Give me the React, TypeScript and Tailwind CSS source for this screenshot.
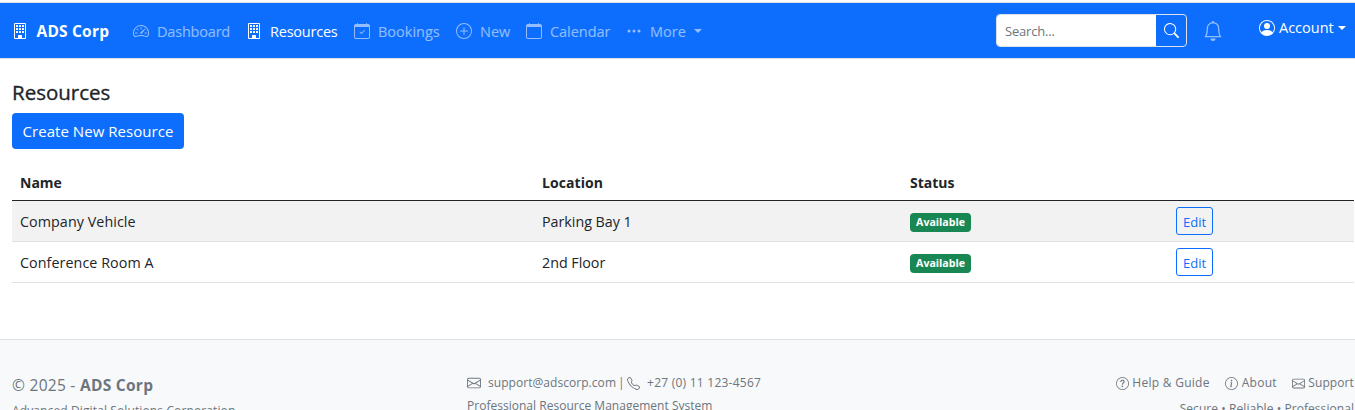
import type { ReactNode } from "react";
import {
  BsBell,
  BsBuilding,
  BsCalendar,
  BsCalendarCheck,
  BsEnvelope,
  BsInfoCircle,
  BsPersonCircle,
  BsPlusCircle,
  BsQuestionCircle,
  BsSearch,
  BsSpeedometer2,
  BsTelephone,
  BsThreeDots,
} from "react-icons/bs";

function Caret() {
  return <span className="block h-0 w-0 border-x-4 border-t-4 border-x-transparent border-t-current" />;
}

type NavItemProps = { icon: ReactNode; label: string; width: string; active?: boolean; children?: ReactNode };

function NavItem({ icon, label, width, active, children }: NavItemProps) {
  return (
    <a className={`flex shrink-0 items-center ${width} ${active ? "text-white" : "text-white/55"}`}>
      <span className="mr-2 w-4 shrink-0">{icon}</span>
      <span className="pt-px">{label}</span>
      {children}
    </a>
  );
}

function Navbar() {
  return (
    <nav className="flex h-[57px] items-center border-y border-[#dee2e6] bg-[#0d6efd] pl-3 text-white">
      <a className="flex w-[121px] shrink-0 items-center pt-px text-[15.5px] font-bold tracking-[0.2px]">
        <BsBuilding className="mr-[8.5px] size-4" />
        <span className="pt-px">ADS Corp</span>
      </a>
      <div className="flex items-center pt-px text-[14.5px]">
        <NavItem icon={<BsSpeedometer2 className="size-4" />} label="Dashboard" width="w-[113px] tracking-[-0.2px]" />
        <NavItem icon={<BsBuilding className="size-4" />} label="Resources" width="w-[108px] tracking-[-0.22px]" active />
        <NavItem icon={<BsCalendarCheck className="size-4" />} label="Bookings" width="w-[102px]" />
        <NavItem icon={<BsPlusCircle className="size-4" />} label="New" width="w-[70px]" />
        <NavItem icon={<BsCalendar className="size-4" />} label="Calendar" width="w-[100px] tracking-[-0.05px]" />
        <NavItem icon={<BsThreeDots className="size-4" />} label="More" width="w-[76px]">
          <span className="ml-auto">
            <Caret />
          </span>
        </NavItem>
      </div>
      <div className="ml-auto flex w-[359px] shrink-0 items-center">
        <form className="flex h-[33px] w-[191px] overflow-hidden rounded border border-[#dee2e6]">
          <span className="flex flex-1 items-center bg-white pt-0.5 pl-2 text-[13px] tracking-[-0.2px] text-[#6c757d]">
            Search...
          </span>
          <span className="flex w-[30px] items-center justify-center">
            <BsSearch className="size-[15px]" />
          </span>
        </form>
        <BsBell className="ml-4 size-5 text-white/55" />
        <a className="mb-[6px] ml-9 flex items-center text-[14.5px]">
          <BsPersonCircle className="mr-1 size-4" />
          Account
          <span className="ml-1">
            <Caret />
          </span>
        </a>
      </div>
    </nav>
  );
}

const resources = [
  { name: "Company Vehicle", location: "Parking Bay 1", status: "Available" },
  { name: "Conference Room A", location: "2nd Floor", status: "Available" },
];

function ResourceTable() {
  return (
    <div className="mt-4 w-[1342px] text-[14.3px]">
      <div className="grid h-9 grid-cols-[522px_368px_266px_1fr] items-center border-b border-[#212529] text-[14px] font-bold">
        <span className="pl-2">Name</span>
        <span className="pl-2 tracking-[0.08px]">Location</span>
        <span className="pl-2">Status</span>
      </div>
      {resources.map((r) => (
        <div
          key={r.name}
          className="grid h-[41px] grid-cols-[522px_368px_266px_1fr] items-center border-b border-[#dee2e6] odd:bg-white even:bg-[#f2f2f2]"
        >
          <span className="pt-0.5 pl-2 tracking-[0.07px]">{r.name}</span>
          <span className="pt-0.5 pl-2 tracking-[-0.02px]">{r.location}</span>
          <span className="pl-2">
            <span className="mt-[3px] flex h-[19px] w-[61px] items-center justify-center rounded bg-[#198754] pt-px text-[10.6px] font-bold text-white">
              {r.status}
            </span>
          </span>
          <span className="pl-2">
            <button className="flex h-7 w-[37px] items-center justify-center rounded-[3px] border border-[#0d6efd] pt-[3px] text-[13px] text-[#0d6efd]">
              Edit
            </button>
          </span>
        </div>
      ))}
    </div>
  );
}

function Footer() {
  return (
    <footer className="mt-14 flex h-[71px] overflow-hidden border-t border-[#dee2e6] bg-[#f8f9fa] pl-3 text-[12px] text-[#6c757d]">
      <div className="w-[455px] shrink-0 pt-[34px]">
        <p className="text-[15.5px] leading-[22px] tracking-[0.28px]">
          © 2025 - <strong>ADS Corp</strong>
        </p>
        <p className="mt-[6px] leading-[18px] tracking-[0.12px]">Advanced Digital Solutions Corporation</p>
      </div>
      <div className="shrink-0 pt-[34px]">
        <p className="flex items-center leading-[18px]">
          <BsEnvelope className="mr-[7px] size-[14px]" />
          <span className="tracking-[0.05px]">support@adscorp.com</span>
          <span className="mr-[3px] ml-0.5 w-1.5">|</span>
          <BsTelephone className="mr-[7px] size-[13px]" />
          <span className="tracking-[0.24px]">+27 (0) 11 123-4567</span>
        </p>
        <p className="mt-[5px] leading-[18px] tracking-[0.02px]">Professional Resource Management System</p>
      </div>
      <div className="ml-auto flex flex-col items-end pr-px pt-[34px]">
        <div className="flex gap-[15px] leading-[18px]">
          <a className="flex items-center gap-[3.5px] tracking-[0.28px]">
            <BsQuestionCircle className="size-[13px]" />
            Help &amp; Guide
          </a>
          <a className="flex items-center gap-1 tracking-[0.24px]">
            <BsInfoCircle className="size-[13px]" />
            About
          </a>
          <a className="flex items-center gap-[3.5px] tracking-[0.1px]">
            <BsEnvelope className="size-[13px]" />
            Support
          </a>
        </div>
        <p className="mt-2 leading-[18px] tracking-[0.06px]">Secure • Reliable • Professional</p>
      </div>
    </footer>
  );
}

export default function App() {
  return (
    <div className="h-[410px] overflow-hidden bg-white pt-[2px] font-['Open_Sans','Noto_Sans',sans-serif] text-[#212529]">
      <Navbar />
      <main className="pl-3">
        <h1 className="pt-5 text-[20.5px] leading-[26px] font-medium [-webkit-text-stroke:0.35px_currentColor]">Resources</h1>
        <button className="mt-2 flex h-9 w-[172px] items-center justify-center rounded bg-[#0d6efd] text-[15px] tracking-[0.05px] text-white">
          Create New Resource
        </button>
        <ResourceTable />
      </main>
      <Footer />
    </div>
  );
}
